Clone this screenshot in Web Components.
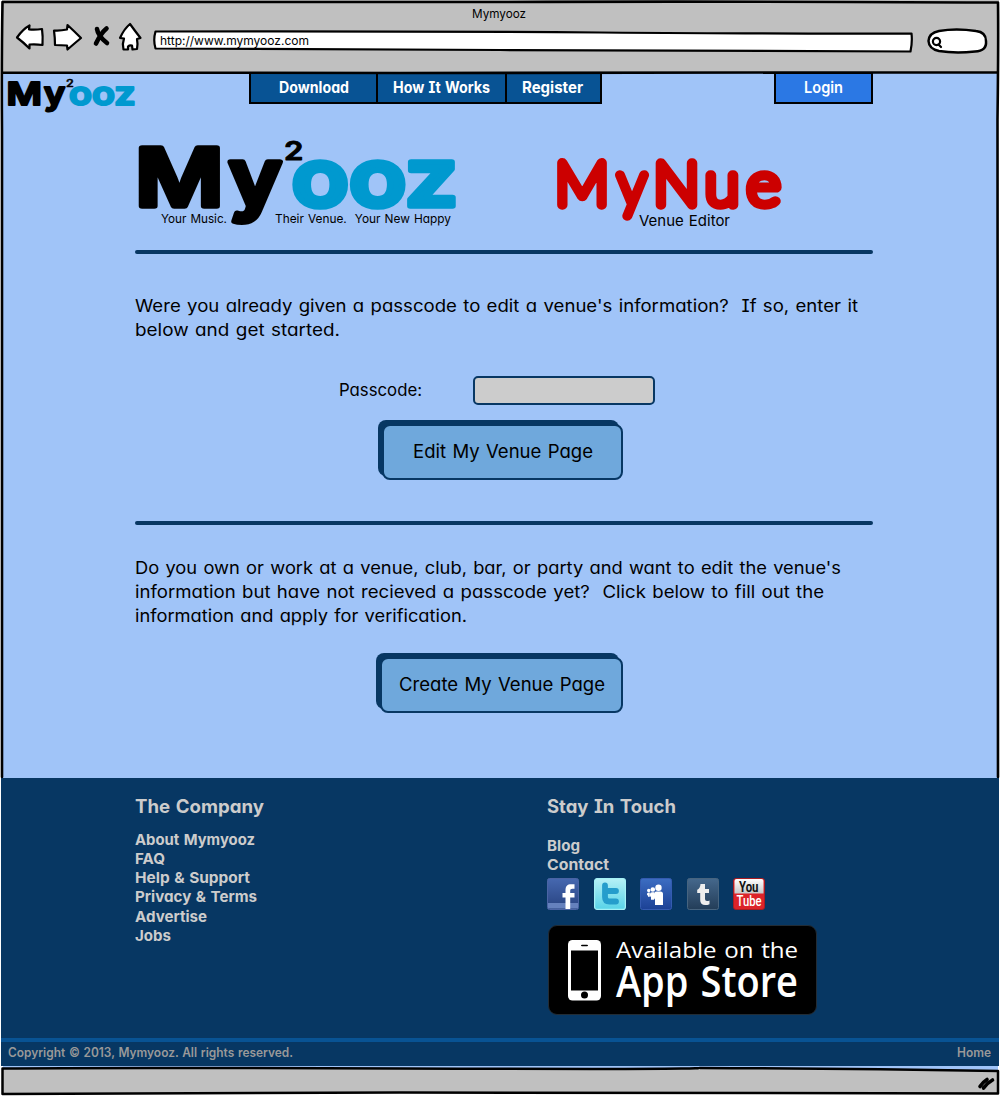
<!DOCTYPE html>
<html lang="en">
<head>
<meta charset="utf-8">
<title>Mymyooz</title>
<style>
html,body{margin:0;padding:0;background:#fff;overflow:hidden}
body{width:1000px;height:1096px;font-family:Inter,"Liberation Sans",sans-serif}
</style>
</head>
<body>
<browser-window></browser-window>
<script>
const define = (name, html) => {
  const tpl = document.createElement('template');
  tpl.innerHTML = html;
  customElements.define(name, class extends HTMLElement {
    constructor() {
      super();
      this.attachShadow({ mode: 'open' }).appendChild(tpl.content.cloneNode(true));
    }
  });
};

/* One line of text fitted to a width: w = width, s = font size, h = line height, b = baseline */
customElements.define('fit-line', class extends HTMLElement {
  constructor() { super(); this.attachShadow({ mode: 'open' }); }
  connectedCallback() {
    const a = (n, d) => this.getAttribute(n) || d;
    const w = a('w'), h = a('h', 24), b = a('b', 18), s = a('s', 17);
    this.shadowRoot.innerHTML = `<style>
      :host{display:block;flex:none;width:${w}px;height:${h}px}
      svg{display:block;overflow:visible}
      text{fill:currentColor;white-space:pre;font-size:${s}px;font-weight:${a('wt', 400)};
        font-family:${a('font', 'Inter')},"Liberation Sans",sans-serif;
        font-feature-settings:"cv11","cv08";word-spacing:.06em}
    </style><svg width="${w}" height="${h}"><text y="${b}" textLength="${w}" lengthAdjust="spacingAndGlyphs"></text></svg>`;
    this.shadowRoot.querySelector('text').textContent = a('text', '');
  }
});

define('myooz-logo', `<style>
  :host{display:block;flex:none}
  svg{display:block;width:100%;height:100%;overflow:visible}
  text{font-family:Inter,"Liberation Sans",sans-serif;font-weight:600;font-size:80px;stroke-width:5.500;stroke-linejoin:round}
  .k{fill:#000;stroke:#000}.b{fill:#0099cf;stroke:#0099cf}
</style>
<svg viewBox="0 0 318 84">
  <text class="k" x="-4" y="65.800" textLength="89" lengthAdjust="spacingAndGlyphs">M</text>
  <text class="k" x="90" y="65.800" textLength="53" lengthAdjust="spacingAndGlyphs">y</text>
  <text class="k" x="145.500" y="19.500" textLength="19.500" lengthAdjust="spacingAndGlyphs" style="font-size:26px;stroke-width:1">2</text>
  <text class="b" x="153" y="65.800" textLength="167" lengthAdjust="spacingAndGlyphs">ooz</text>
</svg>`);

define('mynue-logo', `<style>
  :host{display:block;flex:none;width:228px;height:70px}
  svg{display:block;overflow:visible}
  text{font-family:Lato,sans-serif;font-weight:100;font-size:59px;fill:#c00;stroke:#c00;stroke-width:9.500;stroke-linejoin:round;stroke-linecap:round}
</style>
<svg width="228" height="70">
  <text x="-1" y="47" textLength="54" lengthAdjust="spacingAndGlyphs">M</text>
  <text x="62" y="47" textLength="28" lengthAdjust="spacingAndGlyphs">y</text>
  <text x="97.500" y="47" textLength="46" lengthAdjust="spacingAndGlyphs">N</text>
  <text x="149" y="47" textLength="34" lengthAdjust="spacingAndGlyphs">u</text>
  <text x="191" y="47" textLength="33" lengthAdjust="spacingAndGlyphs">e</text>
</svg>`);

define('nav-tab', `<style>
  :host{display:flex;justify-content:center;box-sizing:border-box;height:32px;border:2px solid #000;background:var(--tab,#085394);color:#fff;padding-top:1px}
</style><slot></slot>`);

define('rule-line', `<style>:host{display:block;width:738px;height:4px;border-radius:2px;background:#073763}</style>`);

define('passcode-input', `<style>
  :host{display:block;box-sizing:border-box;width:182px;height:29px;border:2px solid #073763;border-radius:5px;background:#ccc}
  input{display:block;width:100%;height:100%;border:0;padding:0 6px;box-sizing:border-box;background:none;outline:0}
</style><input aria-label="Passcode">`);

define('raised-button', `<style>
  :host{display:block;box-sizing:border-box;padding:4px 0 0 4px;height:60px}
  .back{height:56px;margin:-4px 4px 0 -4px;border-radius:8px;background:#073763}
  .front{display:flex;justify-content:center;box-sizing:border-box;height:56px;margin-top:-52px;border:2px solid #073763;border-radius:8px;background:#6fa8dc;padding-top:13px;position:relative}
</style><div class="back"></div><div class="front"><slot></slot></div>`);

define('browser-chrome', `<style>
  :host{display:block;height:73px}
  .in{display:flex;flex-direction:column;height:73px;background:#c0c0c0;margin:0 1px 0 2px}
  .title{display:flex;justify-content:center;height:23px;margin-right:4px}
  .tools{display:flex;height:34px}
  .icons{width:151px}
  .url{width:761px;display:grid}
  .url>*{grid-area:1/1}
  .url fit-line{margin:7px 0 0 7px}
  svg{display:block;overflow:visible;fill:#fff;stroke:#000;stroke-width:2.2;stroke-linejoin:round;stroke-linecap:round}
</style>
<div class="in">
  <div class="title"><fit-line text="Mymyooz" w="54" s="12" h="23" b="18"></fit-line></div>
  <div class="tools">
    <svg class="icons" viewBox="2 23 151 34" width="151" height="34">
      <path d="M17 37.500Q23 29 29.500 25.500L29 29.500Q36 30 42 29Q43 36 42.500 45Q36 44 29.500 44.500L29.500 48.500Q23 42 17 37.500Z"/>
      <path d="M54 30.500Q60 31 67 29.500L67.500 25Q74 31 81 38Q75 43 67.500 49.500L67 45.500Q61 45 55 45Q55 38 54 30.500Z"/>
      <path d="M97 29Q98 36 107 43M106.500 28.500Q101 33 96 43.500" stroke-width="4.600" fill="none"/>
      <path d="M130 24Q135 31 140.500 38L137 39Q138 44 137 49L132.500 49.500L132 45.500Q129.500 45 128 46.500L128 49.500L123.500 49.500Q122 44 124 38.500L120 38Q124 29 130 24Z"/>
    </svg>
    <div class="url">
      <svg width="761" height="34" viewBox="153 23 761 34"><path d="M155.500 31.500Q400 31 600 32.500T911.500 33.500Q912.500 42 910.500 51.500Q700 51.500 500 50T155.500 48.500Q153 40 155.500 31.500Z"/></svg>
      <fit-line text="http://www.mymyooz.com" w="149" s="12.200" h="22" b="15"></fit-line>
    </div>
    <svg width="84" height="34" viewBox="914 23 84 34">
      <path d="M928.500 41Q929 33 939 31Q956 28 976 31Q986 32 986 41Q987 51 975 51.500Q955 53.500 939 51Q929 49 928.500 41Z" stroke-width="2.500"/>
      <circle cx="936.500" cy="41.500" r="3.600"/><path d="M938.500 44.500L941 47"/>
    </svg>
  </div>
</div>`);

define('window-frame', `<style>
  :host{position:absolute;left:0;top:0;pointer-events:none}
  svg{display:block;fill:none;stroke:#000;stroke-width:2.600;stroke-linecap:round}
</style>
<svg width="1000" height="1096">
  <path d="M2.500 2Q300 3 500 2T998 2.500M2.500 2Q1.500 60 2 130T2 777M998 2.500Q998.500 40 997.500 120T998 777M2 72.500Q200 73.500 400 73T998 72.300"/>
</svg>`);

define('site-hero', `<style>
  :host{display:block;height:705px;margin:0 2px 0 3px;background:#a0c4f8;box-sizing:border-box}
  .top{display:flex;height:45px;align-items:flex-start}
  .top myooz-logo{width:127px;height:33.500px;margin:6px 0 0 5px}
  .tabs{display:flex;margin-left:114px;margin-top:-1px}
  .tabs nav-tab+nav-tab{margin-left:-2px}
  .login{width:99px;margin:-1px 0 0 172px;--tab:#2b78e4}
  .col{margin-left:132px;width:738px}
  .brand{display:flex;height:132px;align-items:flex-start}
  .l{width:417px;padding-left:4px;box-sizing:border-box;padding-top:22px}
  .l myooz-logo{width:317px;height:84px}
  .tag{display:flex;margin:-14px 0 0 22px;position:relative}
  .r{padding:40px 0 0 4px}
  .r .ed{margin:-14px 0 0 83px;position:relative}
  .p1{padding-top:40px}
  .row{display:flex;padding:34px 0 0 204px;height:44px;box-sizing:content-box}
  .row passcode-input{margin-left:51px}
  .edit{width:245px;margin:0 0 41px 243px}
  .p2{padding-top:31px}
  .create{width:247px;margin:25px 0 0 241px}
</style>
<div class="top">
  <myooz-logo></myooz-logo>
  <div class="tabs">
    <nav-tab style="width:129px;padding-left:1px"><fit-line text="Download" w="70" s="15.500" b="18" wt="700"></fit-line></nav-tab>
    <nav-tab style="width:131px"><fit-line text="How It Works" w="97" s="15.500" b="18" wt="700"></fit-line></nav-tab>
    <nav-tab style="width:97px;padding-right:3px"><fit-line text="Register" w="61" s="15.500" b="18" wt="700"></fit-line></nav-tab>
  </div>
  <nav-tab class="login"><fit-line text="Login" w="39" s="15.500" b="18" wt="600"></fit-line></nav-tab>
</div>
<div class="col">
  <div class="brand">
    <div class="l"><myooz-logo></myooz-logo>
      <div class="tag">
        <fit-line text="Your Music." w="66" s="12.300" h="18" b="12.800"></fit-line>
        <fit-line style="margin-left:48px" text="Their Venue.  Your New Happy" w="176" s="12.300" h="18" b="12.800"></fit-line>
      </div>
    </div>
    <div class="r"><mynue-logo></mynue-logo><fit-line class="ed" text="Venue Editor" w="91" s="15" h="20" b="12"></fit-line></div>
  </div>
  <rule-line></rule-line>
  <div class="p1">
    <fit-line text="Were you already given a passcode to edit a venue's information?  If so, enter it" w="723" s="17.300"></fit-line>
    <fit-line text="below and get started." w="205" s="17.300"></fit-line>
  </div>
  <div class="row"><fit-line text="Passcode:" w="83" s="17" b="20"></fit-line><passcode-input></passcode-input></div>
  <raised-button class="edit"><fit-line text="Edit My Venue Page" w="180" s="18.500" b="19"></fit-line></raised-button>
  <rule-line></rule-line>
  <div class="p2">
    <fit-line text="Do you own or work at a venue, club, bar, or party and want to edit the venue's" w="706" s="17.300"></fit-line>
    <fit-line text="information but have not recieved a passcode yet?  Click below to fill out the" w="689" s="17.300"></fit-line>
    <fit-line text="information and apply for verification." w="332" s="17.300"></fit-line>
  </div>
  <raised-button class="create"><fit-line text="Create My Venue Page" w="206" s="18.500" b="19"></fit-line></raised-button>
</div>`);

define('social-icons', `<style>
  :host{display:flex;gap:14.500px}
  svg{display:block;width:32px;height:32px;overflow:visible}
  text{font-weight:700}
</style>
<svg viewBox="0 0 32 32"><defs><linearGradient id="a" x2="0" y2="1"><stop stop-color="#4668b0"/><stop offset="1" stop-color="#27427f"/></linearGradient></defs>
  <rect x=".5" y=".5" width="31" height="31" rx="2" fill="url(#a)" stroke="#4a64a4"/><path d="M1 25h30v5.500H1z" fill="#6581bd"/>
  <path d="M18.500 31V19.500h-3V15h3v-2.500c0-4.500 2-6.200 5.500-6.200h3.500v4.500H25.500c-1.800 0-2.300.7-2.300 2.200V15h4.300v4.500h-4.300V31z" fill="#fff"/></svg>
<svg viewBox="0 0 32 32"><defs><linearGradient id="b" x2="0" y2="1"><stop stop-color="#b6f1f6"/><stop offset="1" stop-color="#57d3e8"/></linearGradient></defs>
  <rect x=".6" y=".6" width="30.800" height="30.800" rx="2.500" fill="url(#b)" stroke="#a5f1f6" stroke-width="1.200"/>
  <path d="M11 7.500V19Q11 23.500 15.500 23.500H22M11 13H22" fill="none" stroke="#259dcc" stroke-width="5.800" stroke-linecap="round" stroke-linejoin="round"/></svg>
<svg viewBox="0 0 32 32"><defs><linearGradient id="c" x2="0" y2="1"><stop stop-color="#3c6dc2"/><stop offset="1" stop-color="#1c4195"/></linearGradient></defs>
  <rect x=".5" y=".5" width="31" height="31" rx="2" fill="url(#c)" stroke="#345bb0"/>
  <g fill="#fff"><circle cx="18.500" cy="9.800" r="3.200"/><circle cx="12.800" cy="11.500" r="2.300"/><circle cx="8.700" cy="12.500" r="1.700"/>
  <path d="M14 16q0-2.500 2.500-2.500h4q2.500 0 2.500 2.500v11h-8v-5.500q-1-.5-1-2z"/><path d="M10 16q0-1.800 2-1.800h2v7.500h-3v-2.700q-1-.3-1-1.500z"/><path d="M7 16q0-1.500 1.500-1.500h1.300v4.300H8v-1.300q-1 0-1-1z"/></g></svg>
<svg viewBox="0 0 32 32"><defs><linearGradient id="d" x2="0" y2="1"><stop stop-color="#45688c"/><stop offset="1" stop-color="#233d58"/></linearGradient></defs>
  <rect x=".5" y=".5" width="31" height="31" rx="2" fill="url(#d)" stroke="#47647f"/>
  <path d="M13.500 6h4.500v5h4v4h-4v6q0 2 2 2 1.200 0 2.500-.6v3.800q-2 .9-4.300.9-5 0-5-5V15h-3v-3.300q3-1 3.300-5.700z" fill="#eee"/></svg>
<svg viewBox="0 0 32 32"><defs><linearGradient id="e" x2="0" y2="1"><stop stop-color="#fff"/><stop offset="1" stop-color="#c8c8c8"/></linearGradient></defs>
  <rect x=".5" y=".5" width="31" height="31" rx="2.500" fill="#dc2329" stroke="#a81c22"/><path d="M1.500 3q0-2 2-2h25q2 0 2 2v12.500h-29z" fill="url(#e)"/>
  <g font-family="Roboto, sans-serif" font-size="14"><text x="6" y="13.800" textLength="19.500" lengthAdjust="spacingAndGlyphs" fill="#111">You</text>
  <text x="3.500" y="28.300" textLength="25" lengthAdjust="spacingAndGlyphs" fill="#fff" style="font-weight:500">Tube</text></g></svg>`);

define('app-badge', `<style>
  :host{display:flex;box-sizing:border-box;width:269px;height:90px;border-radius:9px;background:#000;border:1px solid #222c35;padding:14px 0 0 19px;color:#fff}
  .t{margin-left:15px}
</style>
<svg width="33" height="61" viewBox="0 0 33 61"><rect width="33" height="60.500" rx="4.500" fill="#fff"/><path d="M3 10.500h27v40H3z"/><path d="M13 5.500q0-.8 1-.8h5q1 0 1 .8t-1 .8h-5q-1 0-1-.8z"/><circle cx="16.500" cy="55" r="3.500"/></svg>
<div class="t"><fit-line font="'Open Sans'" text="Available on the" w="182" s="22" h="20" b="17.500" wt="500"></fit-line>
<fit-line font="'Open Sans'" text="App Store" w="182" s="43" h="40" b="36.500" wt="600"></fit-line></div>`);

define('site-footer', `<style>
  :host{display:block;position:relative;margin:0 1px;height:288px;background:#073763;color:#ccc;box-sizing:border-box}
  .cols{display:flex;height:260px;padding-left:134px;box-sizing:border-box}
  .c{width:412px;padding-top:14px}
  .links{padding-top:15px}
  .links.b{padding-top:21px}
  social-icons{margin-top:3px}
  app-badge{margin:15px 0 0 1px}
  .bar{display:flex;justify-content:space-between;box-sizing:border-box;height:28px;border-top:4px solid #085394;padding:2px 8px 0 7px;color:#999}
</style>
<div class="cols">
  <div class="c">
    <fit-line text="The Company" w="129" s="18.500" b="20.500" wt="700"></fit-line>
    <div class="links">
      <fit-line text="About Mymyooz" w="120" s="15" h="19" b="14" wt="700"></fit-line>
      <fit-line text="FAQ" w="30" s="15" h="19" b="14" wt="700"></fit-line>
      <fit-line text="Help &amp; Support" w="115" s="15" h="19" b="14" wt="700"></fit-line>
      <fit-line text="Privacy &amp; Terms" w="122" s="15" h="20" b="14" wt="700"></fit-line>
      <fit-line text="Advertise" w="72" s="15" h="19" b="14" wt="700"></fit-line>
      <fit-line text="Jobs" w="36" s="15" h="19" b="14" wt="700"></fit-line>
    </div>
  </div>
  <div class="c">
    <fit-line text="Stay In Touch" w="129" s="18.500" b="20.500" wt="700"></fit-line>
    <div class="links b">
      <fit-line text="Blog" w="33" s="15" h="19" b="14" wt="700"></fit-line>
      <fit-line text="Contact" w="62" s="15" h="19" b="14" wt="700"></fit-line>
    </div>
    <social-icons></social-icons>
    <app-badge></app-badge>
  </div>
</div>
<div class="bar"><fit-line text="Copyright © 2013, Mymyooz. All rights reserved." w="285" s="12.500" h="20" b="13" wt="600"></fit-line>
<fit-line text="Home" w="34" s="12.500" h="20" b="13" wt="600"></fit-line></div>`);

define('status-bar', `<style>
  :host{display:block;height:30px}
  svg{display:block}
</style>
<svg width="1000" height="30" viewBox="0 1066 1000 30">
  <path d="M3 1066H998V1071H3z" fill="#a0c4f8"/>
  <path d="M2.500 1068.500Q100 1067.500 400 1068.500T700 1068Q850 1068.500 998 1071V1093.500Q700 1092 400 1092.500T2.500 1094Z" fill="#c0c0c0" stroke="#000" stroke-width="2.500" stroke-linejoin="round"/>
  <path d="M980 1086.500Q983 1082 987 1079.500M983.500 1088Q988 1082.500 992.500 1080" fill="none" stroke="#000" stroke-width="3.600" stroke-linecap="round"/>
</svg>`);

define('browser-window', `<style>
  :host{display:flex;flex-direction:column;position:relative;width:1000px;height:1096px;background:#fff;color:#000}
</style>
<browser-chrome></browser-chrome>
<site-hero></site-hero>
<window-frame></window-frame>
<site-footer></site-footer>
<status-bar></status-bar>`);
</script>
</body>
</html>
